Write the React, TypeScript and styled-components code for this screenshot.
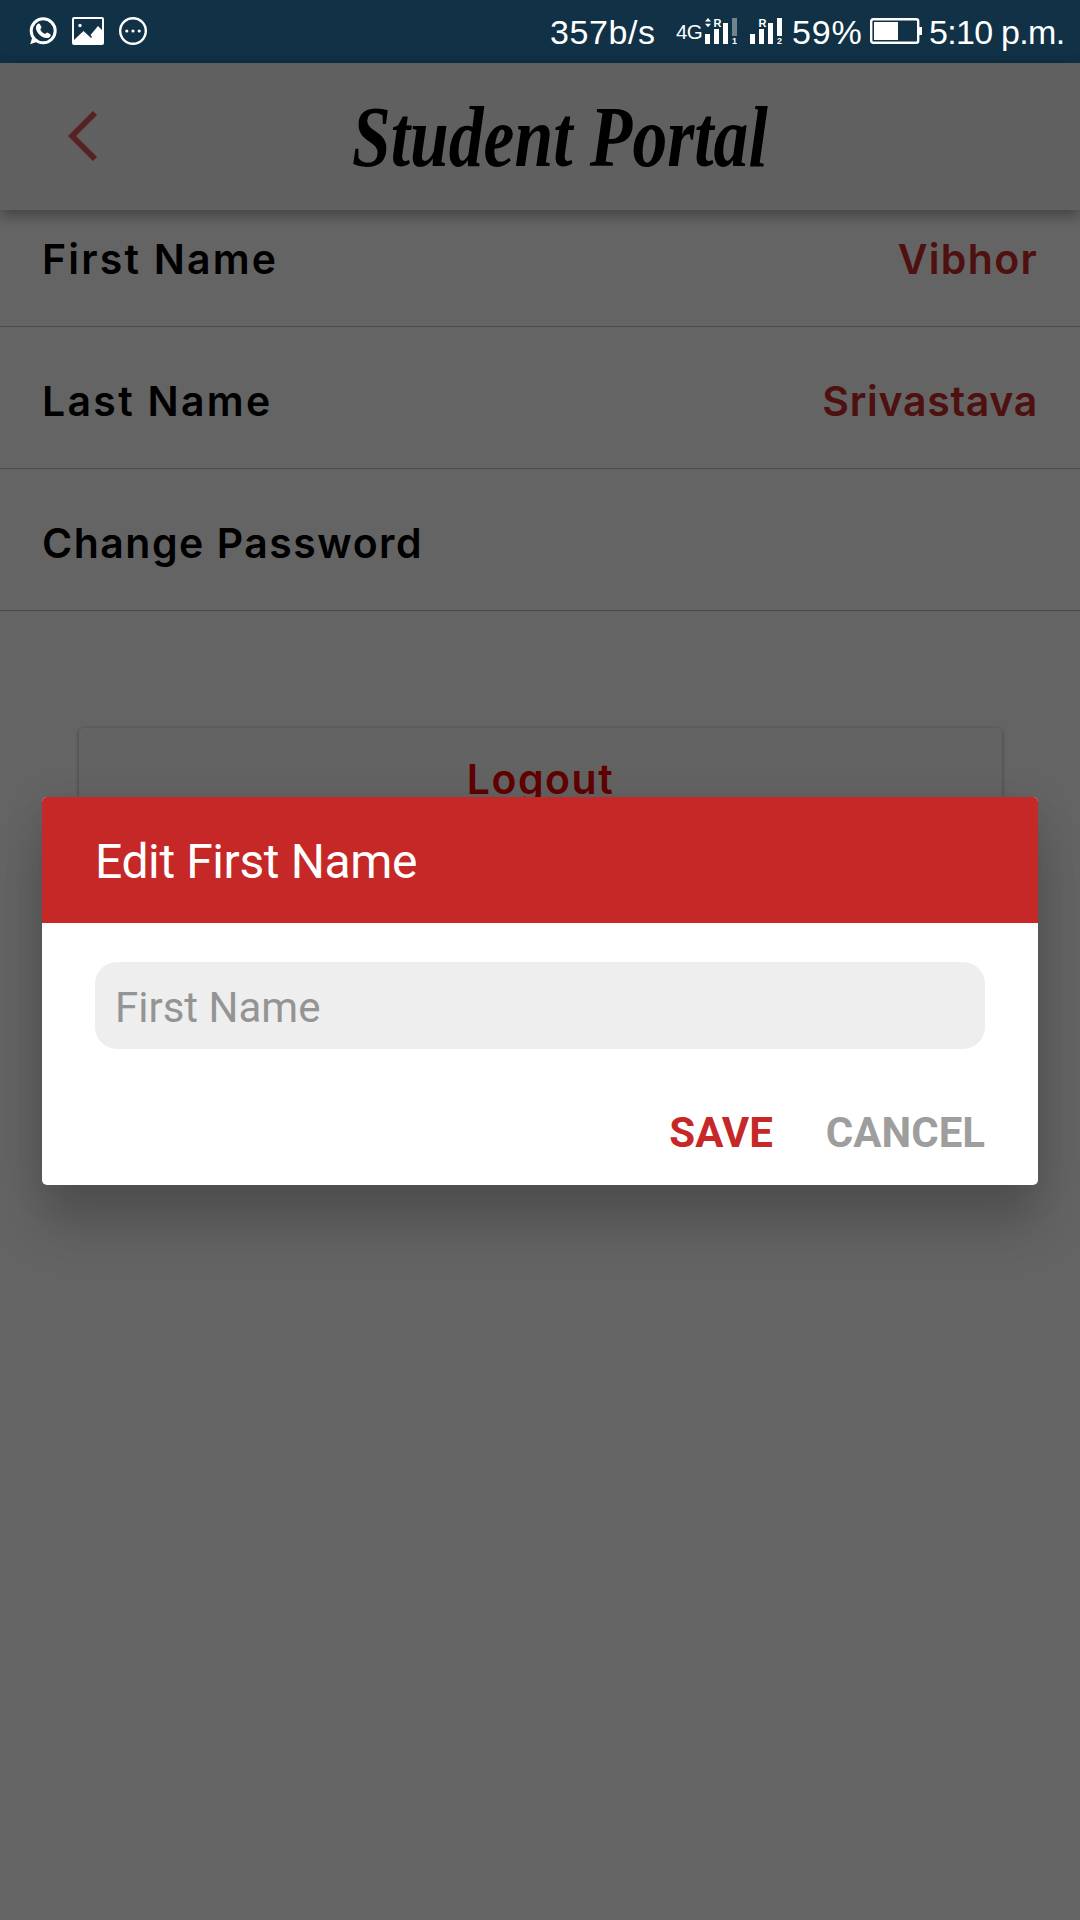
import React from "react";
import styled, { createGlobalStyle } from "styled-components";

const GlobalStyle = createGlobalStyle`
  html, body { margin: 0; padding: 0; background: #fafafa; }
  *, *::before, *::after { box-sizing: border-box; }
`;

const Screen = styled.div`
  position: relative;
  width: 1080px;
  height: 1920px;
  overflow: hidden;
  display: flex;
  flex-direction: column;
  background: #fafafa;
`;

const StatusBar = styled.header`
  flex: none;
  height: 63px;
  padding: 0 16px 1px 29px;
  display: flex;
  align-items: center;
  justify-content: space-between;
  background: #103146;
  color: #fff;
  font-family: "Liberation Sans", Arial, sans-serif;
`;

const StatusGroup = styled.div`
  display: flex;
  align-items: center;
`;

const Notifications = styled(StatusGroup)`
  gap: 15px;
`;

const StatusText = styled.span<{ $width: number; $gap: number; $spacing: number }>`
  flex: none;
  width: ${(p) => p.$width}px;
  margin-right: ${(p) => p.$gap}px;
  font-size: 34px;
  line-height: 40px;
  white-space: nowrap;
  letter-spacing: ${(p) => p.$spacing}px;
  padding-top: 2px;
`;

const NetworkType = styled.span`
  width: 29px;
  font-size: 20.5px;
  line-height: 24px;
  letter-spacing: -0.6px;
  padding-top: 2px;
`;

const Icon = styled.svg`
  display: block;
  flex: none;
`;

const SignalIcon = styled(Icon)<{ $gap: number }>`
  margin-right: ${(p) => p.$gap}px;
  font-family: "Liberation Sans", Arial, sans-serif;
  font-weight: 700;
`;

const BatteryIcon = styled(Icon)`
  margin-right: 7px;
`;

const TitleBar = styled.div`
  position: relative;
  z-index: 1;
  flex: none;
  height: 147px;
  padding: 0 68px 1px;
  display: grid;
  grid-template-columns: 30px 1fr 30px;
  align-items: center;
  background: #f0f0f0;
  box-shadow: 0 5px 14px rgba(0, 0, 0, 0.36);
`;

const Title = styled.h1`
  margin: 0;
  justify-self: center;
  white-space: nowrap;
  font-family: "Liberation Serif", "Times New Roman", serif;
  font-size: 87px;
  line-height: 100px;
  font-style: italic;
  font-weight: 700;
  color: #000;
  transform: translate(20px, 1px) scaleX(0.8);
`;

const SettingsList = styled.div`
  flex: none;
  margin-top: -25px;
`;

const SettingRow = styled.div`
  height: 142px;
  padding: 6px 42px 0;
  display: flex;
  align-items: center;
  justify-content: space-between;
  border-bottom: 1px solid #b8b8b8;
  font-family: Inter, "Open Sans", sans-serif;
  font-size: 41px;
  font-weight: 600;
`;

const Label = styled.span<{ $spacing: number }>`
  color: #000;
  letter-spacing: ${(p) => p.$spacing}px;
`;

const Value = styled.span<{ $spacing: number }>`
  color: #c62828;
  letter-spacing: ${(p) => p.$spacing}px;
`;

const LogoutButton = styled.button`
  flex: none;
  margin: 117px 78px 0 79px;
  height: 101px;
  padding: 0;
  border: 0;
  border-radius: 5px;
  background: #f7f7f7;
  box-shadow: 0 1px 4px rgba(0, 0, 0, 0.35);
  color: #f20000;
  font-family: Inter, "Open Sans", sans-serif;
  font-size: 41px;
  font-weight: 600;
  letter-spacing: 1.5px;
`;

const Scrim = styled.div`
  position: absolute;
  z-index: 2;
  inset: 63px 0 0;
  padding-bottom: 2px;
  display: flex;
  align-items: center;
  justify-content: center;
  background: rgba(0, 0, 0, 0.6);
  font-family: Roboto, sans-serif;
`;

const Dialog = styled.section`
  width: 996px;
  height: 388px;
  border-radius: 5px;
  overflow: hidden;
  background: #fff;
  box-shadow: 0 42px 50px rgba(0, 0, 0, 0.18), 0 6px 40px rgba(0, 0, 0, 0.1);
`;

const DialogHeader = styled.h2`
  margin: 0;
  height: 126px;
  padding: 4px 53px 0;
  display: flex;
  align-items: center;
  background: #c62828;
  color: #fff;
  font-size: 48px;
  font-weight: 400;
  letter-spacing: -0.4px;
`;

const DialogBody = styled.div`
  padding: 39px 53px 0;
  display: flex;
  flex-direction: column;
`;

const NameInput = styled.input`
  width: 100%;
  height: 87px;
  padding: 4px 20px 0;
  border: 0;
  border-radius: 22px;
  background: #eeeeee;
  font: 400 42px Roboto, sans-serif;
  &::placeholder {
    color: #949494;
    opacity: 1;
  }
`;

const Actions = styled.div`
  margin-top: 59px;
  display: flex;
  justify-content: flex-end;
  gap: 53px;
`;

const ActionButton = styled.button<{ $color: string }>`
  padding: 0;
  border: 0;
  background: none;
  color: ${(p) => p.$color};
  font: 700 42px/50px Roboto, sans-serif;
`;

const ChatIcon = () => (
  <Icon width="28" height="28" viewBox="0 0 28 28">
    <path d="M3.5 19.5 1.2 27.2l7-2.5" fill="#fff" />
    <circle cx="14.2" cy="13.8" r="12" fill="#103146" stroke="#fff" strokeWidth="3" />
    <path
      d="M8.4 7.2c1-1 2.2-.8 2.7.2l1.3 2.6c.4.9-.9 1.8-1.1 2.4.9 2.2 2.6 3.8 4.9 4.6.8-.3 1.5-1.8 2.4-1.3l2.5 1.3c1 .6.7 2-.3 2.9-3 2.7-8.1.2-10.8-2.7-2.8-3-4.3-7.3-1.6-10z"
      fill="#fff"
    />
  </Icon>
);

const PictureIcon = () => (
  <Icon width="32" height="28" viewBox="0 0 32 28">
    <rect x="1" y="1" width="30" height="26" rx="1" fill="#103146" stroke="#fff" strokeWidth="2" />
    <circle cx="8" cy="8.5" r="1.7" fill="#fff" />
    <path d="M2 23 11.5 14l6 5.5 1.5 1.5 1-1-1.5-2L26 9l5 5v13H2z" fill="#fff" />
  </Icon>
);

const MoreIcon = () => (
  <Icon width="28" height="28" viewBox="0 0 28 28">
    <circle cx="14" cy="14" r="12.8" fill="none" stroke="#fff" strokeWidth="2.4" />
    <g fill="#fff">
      <circle cx="7.8" cy="14" r="1.6" />
      <circle cx="14" cy="14" r="1.6" />
      <circle cx="20.2" cy="14" r="1.6" />
    </g>
  </Icon>
);

const SignalOne = () => (
  <SignalIcon $gap={12} width="33" height="28" viewBox="0 0 33 28" fill="#fff">
    <path d="M0 4.5 3 1l3 3.5zM0 6.8h6L3 10.3z" />
    <rect x="0" y="17" width="5" height="10" />
    <rect x="9" y="12" width="5" height="15" />
    <rect x="18" y="6" width="5" height="21" />
    <rect x="27" y="1" width="5" height="18" fill="#708490" />
    <text x="8.5" y="9.5" fontSize="11">R</text>
    <text x="27" y="27" fontSize="9">1</text>
  </SignalIcon>
);

const SignalTwo = () => (
  <SignalIcon $gap={9} width="33" height="28" viewBox="0 0 33 28" fill="#fff">
    <rect x="0" y="17" width="5" height="10" />
    <rect x="9" y="12" width="5" height="15" />
    <rect x="18" y="6" width="5" height="21" />
    <rect x="27" y="1" width="5" height="18" />
    <text x="8.5" y="9.5" fontSize="11">R</text>
    <text x="27" y="27" fontSize="9">2</text>
  </SignalIcon>
);

const Battery = () => (
  <BatteryIcon width="52" height="26" viewBox="0 0 52 26">
    <rect x="1.2" y="1.2" width="47" height="23.6" rx="2" fill="none" stroke="#fff" strokeWidth="2.4" />
    <rect x="4" y="4" width="24" height="18" fill="#fff" />
    <rect x="49" y="9" width="3" height="8" fill="#fff" />
  </BatteryIcon>
);

const BackIcon = () => (
  <Icon width="30" height="50" viewBox="0 0 30 50">
    <path d="M27 2 4 25 27 48" fill="none" stroke="#de5656" strokeWidth="5.8" />
  </Icon>
);

export default function App() {
  return (
    <>
      <GlobalStyle />
      <Screen>
        <StatusBar>
          <Notifications>
            <ChatIcon />
            <PictureIcon />
            <MoreIcon />
          </Notifications>
          <StatusGroup>
            <StatusText $width={108} $gap={18} $spacing={0.6}>357b/s</StatusText>
            <NetworkType>4G</NetworkType>
            <SignalOne />
            <SignalTwo />
            <StatusText $width={70} $gap={8} $spacing={0.9}>59%</StatusText>
            <Battery />
            <StatusText $width={135} $gap={0} $spacing={-0.7}>5:10 p.m.</StatusText>
          </StatusGroup>
        </StatusBar>
        <TitleBar>
          <BackIcon />
          <Title>Student Portal</Title>
        </TitleBar>
        <SettingsList>
          <SettingRow>
            <Label $spacing={2.2}>First Name</Label>
            <Value $spacing={1.3}>Vibhor</Value>
          </SettingRow>
          <SettingRow>
            <Label $spacing={2.3}>Last Name</Label>
            <Value $spacing={0.7}>Srivastava</Value>
          </SettingRow>
          <SettingRow>
            <Label $spacing={1.5}>Change Password</Label>
          </SettingRow>
        </SettingsList>
        <LogoutButton>Logout</LogoutButton>
        <Scrim>
          <Dialog>
            <DialogHeader>Edit First Name</DialogHeader>
            <DialogBody>
              <NameInput placeholder="First Name" />
              <Actions>
                <ActionButton $color="#c62828">SAVE</ActionButton>
                <ActionButton $color="#9e9e9e">CANCEL</ActionButton>
              </Actions>
            </DialogBody>
          </Dialog>
        </Scrim>
      </Screen>
    </>
  );
}
